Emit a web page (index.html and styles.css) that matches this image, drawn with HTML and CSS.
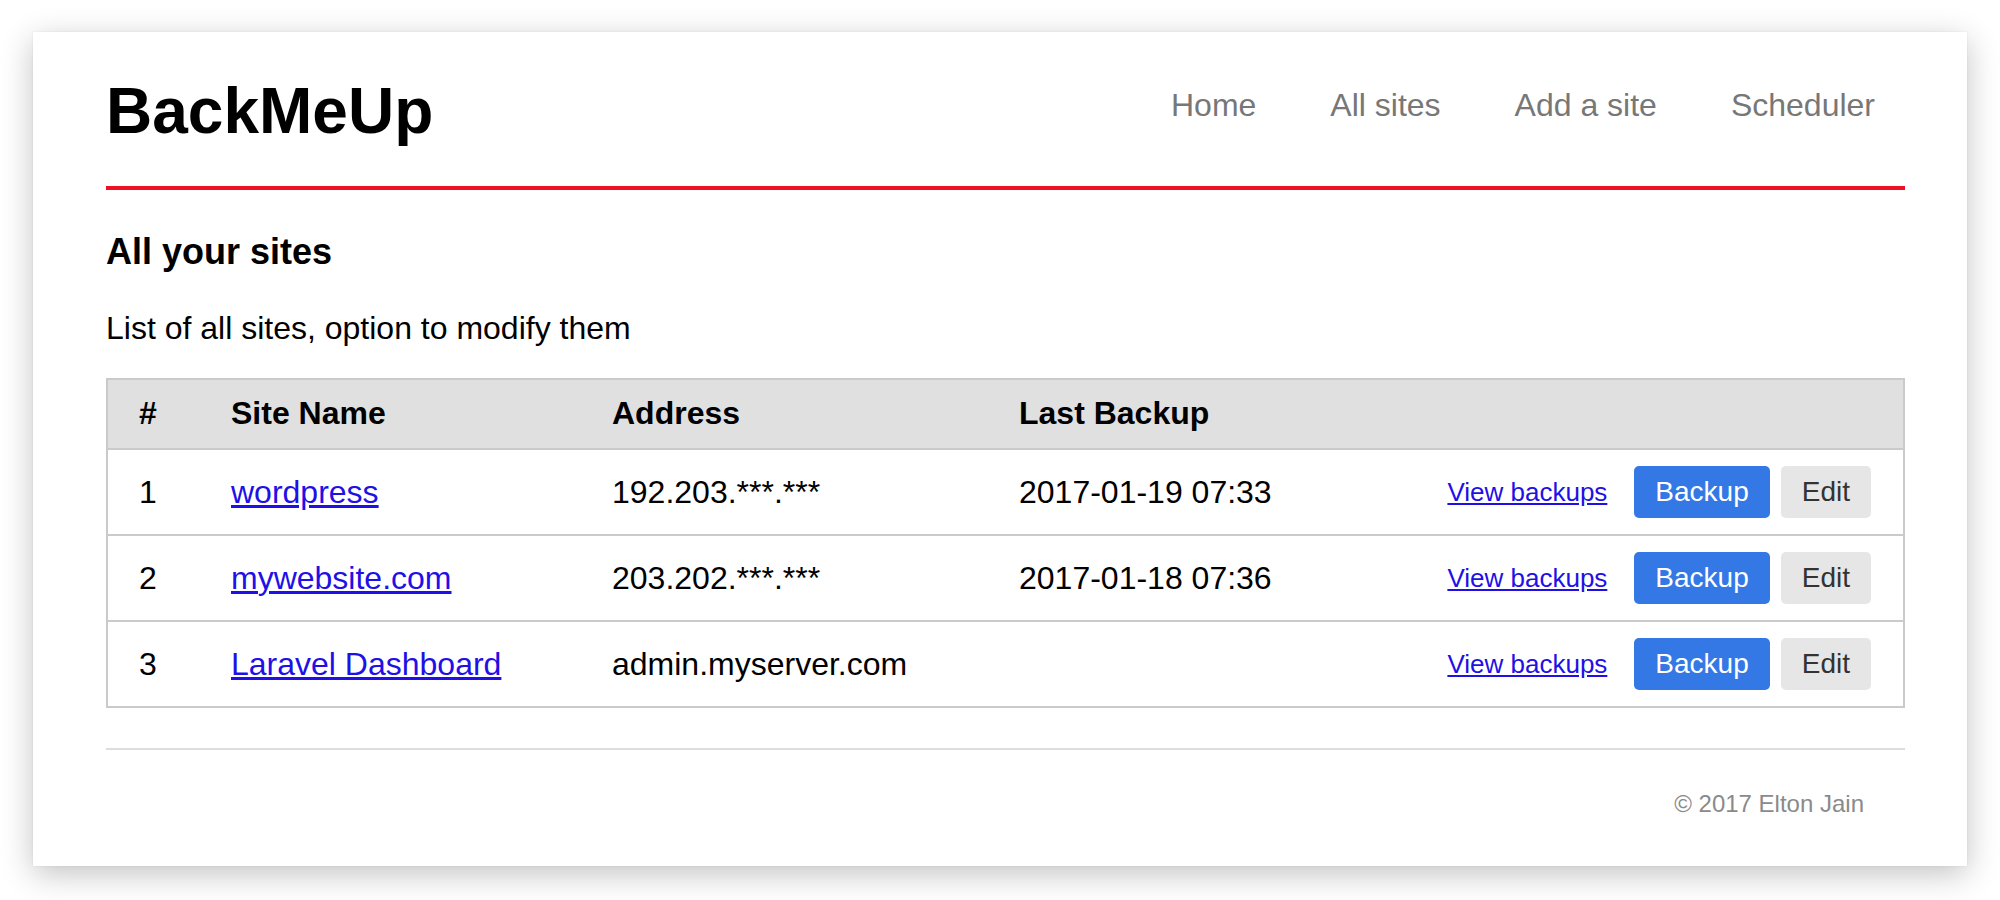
FILE: index.html
```html
<!DOCTYPE html>
<html lang="en">
<head>
<meta charset="utf-8">
<title>BackMeUp - All sites</title>
<link rel="stylesheet" href="styles.css">
</head>
<body>
<div class="window">
  <header class="site-header">
    <h1 class="brand">BackMeUp</h1>
    <nav class="nav">
      <a href="#">Home</a>
      <a href="#">All sites</a>
      <a href="#">Add a site</a>
      <a href="#">Scheduler</a>
    </nav>
  </header>
  <main>
    <h2 class="page-title">All your sites</h2>
    <p class="lead">List of all sites, option to modify them</p>
    <table class="sites">
      <colgroup>
        <col class="c-num">
        <col class="c-name">
        <col class="c-addr">
        <col class="c-last">
        <col class="c-act">
      </colgroup>
      <thead>
        <tr><th>#</th><th>Site Name</th><th>Address</th><th>Last Backup</th><th></th></tr>
      </thead>
      <tbody>
        <tr>
          <td>1</td>
          <td><a class="link" href="#">wordpress</a></td>
          <td>192.203.***.***</td>
          <td>2017-01-19 07:33</td>
          <td class="act"><div class="actions"><a class="small-link" href="#">View backups</a><button class="btn btn-primary">Backup</button><button class="btn btn-default">Edit</button></div></td>
        </tr>
        <tr>
          <td>2</td>
          <td><a class="link" href="#">mywebsite.com</a></td>
          <td>203.202.***.***</td>
          <td>2017-01-18 07:36</td>
          <td class="act"><div class="actions"><a class="small-link" href="#">View backups</a><button class="btn btn-primary">Backup</button><button class="btn btn-default">Edit</button></div></td>
        </tr>
        <tr>
          <td>3</td>
          <td><a class="link" href="#">Laravel Dashboard</a></td>
          <td>admin.myserver.com</td>
          <td></td>
          <td class="act"><div class="actions"><a class="small-link" href="#">View backups</a><button class="btn btn-primary">Backup</button><button class="btn btn-default">Edit</button></div></td>
        </tr>
      </tbody>
    </table>
  </main>
  <footer class="site-footer">
    <p>© 2017 Elton Jain</p>
  </footer>
</div>
</body>
</html>
```
FILE: styles.css
```css
html, body {
  margin: 0;
  background: #ffffff;
}

body {
  padding: 32px 33px 34px;
  font-family: "Liberation Sans", Arial, Helvetica, sans-serif;
  color: #000;
}

.window {
  background: #fff;
  box-sizing: border-box;
  height: 834px;
  padding: 0 62px 0 73px;
  box-shadow: 0 8px 30px rgba(0, 0, 0, 0.24), 0 0 2px rgba(0, 0, 0, 0.08);
}

.site-header {
  display: flex;
  justify-content: space-between;
  align-items: flex-start;
  padding: 42px 0 38px;
  border-bottom: 4px solid #ee1122;
}

.brand {
  margin: 0;
  font-size: 64px;
  line-height: 74px;
  font-weight: 700;
}

.nav {
  display: flex;
  gap: 74px;
  margin-top: 13px;
  padding-right: 30px;
}

.nav a {
  font-size: 32px;
  line-height: 37px;
  color: #777;
  text-decoration: none;
}

.page-title {
  margin: 41px 0 0;
  font-size: 36px;
  line-height: 41px;
  font-weight: 700;
}

.lead {
  margin: 38px 0 0;
  font-size: 32px;
  line-height: 37px;
}

.sites {
  margin-top: 31px;
  width: 100%;
  table-layout: fixed;
  border-collapse: separate;
  border-spacing: 0;
  border: 2px solid #cacaca;
  font-size: 32px;
}

.c-num { width: 92px; }
.c-name { width: 381px; }
.c-addr { width: 407px; }
.c-last { width: 400px; }

.sites th,
.sites td {
  box-sizing: border-box;
  padding: 0 0 0 31px;
  text-align: left;
  vertical-align: middle;
  white-space: nowrap;
}

.sites th {
  background: #e0e0e0;
  height: 68px;
  padding-bottom: 2px;
  font-weight: 700;
}

.sites td {
  height: 86px;
  border-top: 2px solid #cacaca;
}

.link {
  color: #1e10e6;
  text-decoration: underline;
}

.sites td.act {
  padding-right: 32px;
}

.actions {
  display: flex;
  justify-content: flex-end;
  align-items: center;
}

.small-link {
  font-size: 26px;
  color: #1e10e6;
  text-decoration: underline;
  margin-right: 27px;
}

.btn {
  font-family: inherit;
  font-size: 28px;
  height: 52px;
  line-height: 52px;
  padding: 0 21px;
  border: 0;
  border-radius: 5px;
  cursor: pointer;
}

.btn-primary {
  background: #3478e6;
  color: #fff;
}

.btn-default {
  background: #e6e6e6;
  color: #333;
  margin-left: 11px;
}

.site-footer {
  margin-top: 40px;
  border-top: 2px solid #dddddd;
  padding: 40px 41px 0 0;
  text-align: right;
}

.site-footer p {
  margin: 0;
  font-size: 24px;
  line-height: 28px;
  color: #8a8a8a;
}
```
